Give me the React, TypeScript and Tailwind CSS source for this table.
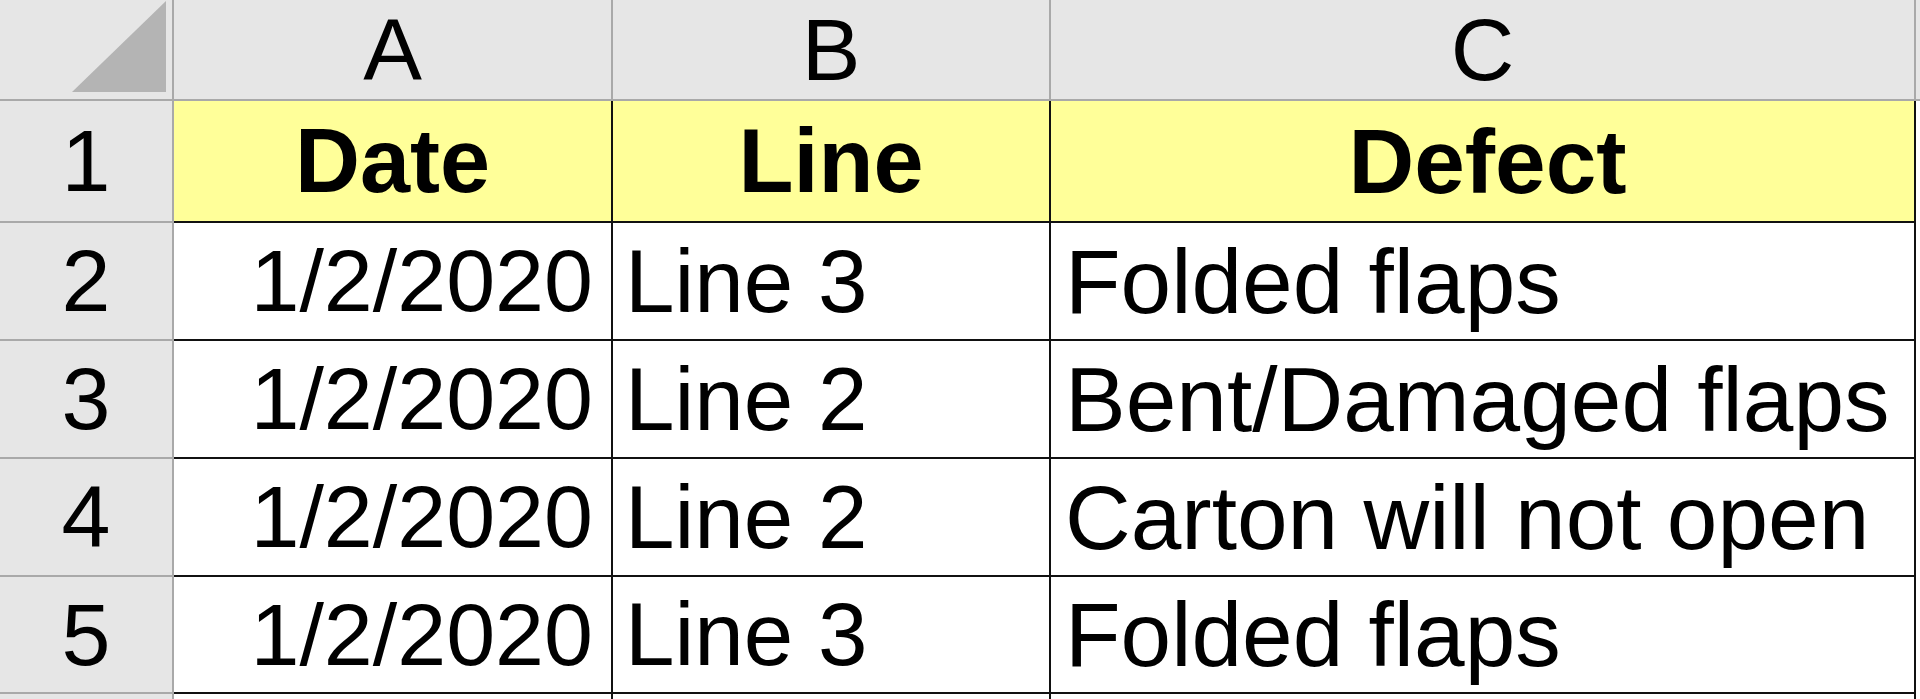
import React from "react";

const font = { fontFamily: '"Liberation Sans", Arial, sans-serif' };

const rows = [
  { n: "2", date: "1/2/2020", line: "Line 3", defect: "Folded flaps" },
  { n: "3", date: "1/2/2020", line: "Line 2", defect: "Bent/Damaged flaps" },
  { n: "4", date: "1/2/2020", line: "Line 2", defect: "Carton will not open" },
  { n: "5", date: "1/2/2020", line: "Line 3", defect: "Folded flaps" },
];

function ColHead({ children }: { children?: React.ReactNode }) {
  return (
    <div className="flex items-center justify-center bg-[#e6e6e6] border-r-2 border-b-2 border-[#a9a9a9] text-[88px] leading-none text-black">
      {children}
    </div>
  );
}

function RowHead({ children }: { children?: React.ReactNode }) {
  return (
    <div className="flex items-center justify-center bg-[#e6e6e6] border-r-2 border-b-2 border-[#a9a9a9] text-[88px] leading-none text-black">
      {children}
    </div>
  );
}

function Cell({
  children,
  className = "",
}: {
  children?: React.ReactNode;
  className?: string;
}) {
  return (
    <div
      className={`flex items-center border-r-2 border-b-2 border-[#111111] leading-none text-black whitespace-nowrap overflow-hidden ${className}`}
    >
      {children}
    </div>
  );
}

export default function App() {
  return (
    <div
      className="h-[699px] w-[1920px] overflow-hidden bg-white grid grid-cols-[174px_439px_438px_865px_1fr] grid-rows-[101px_122px_118px_118px_118px_117px_1fr]"
      style={font}
    >
      <div className="relative bg-[#e6e6e6] border-r-2 border-b-2 border-[#a9a9a9]">
        <svg className="absolute left-[72px] top-[1px]" width="94" height="91" viewBox="0 0 94 91">
          <polygon points="94,0 94,91 0,91" fill="#b4b4b4" />
        </svg>
      </div>
      <ColHead>A</ColHead>
      <ColHead>B</ColHead>
      <ColHead>C</ColHead>
      <div className="bg-[#e6e6e6] border-b-2 border-[#a9a9a9]" />

      <RowHead>1</RowHead>
      <Cell className="justify-center bg-[#ffff99] font-bold text-[90px]">Date</Cell>
      <Cell className="justify-center bg-[#ffff99] font-bold text-[90px]">Line</Cell>
      <Cell className="justify-center bg-[#ffff99] font-bold text-[91px] pl-[10px]">Defect</Cell>
      <div className="bg-white" />

      {rows.map((r) => (
        <React.Fragment key={r.n}>
          <RowHead>{r.n}</RowHead>
          <Cell className="justify-end pr-[18px] bg-white text-[88px]">{r.date}</Cell>
          <Cell className="justify-start pl-[12px] bg-white text-[89px]">{r.line}</Cell>
          <Cell className="justify-start pl-[14px] bg-white text-[91px]">{r.defect}</Cell>
          <div className="bg-white" />
        </React.Fragment>
      ))}

      <div className="bg-[#e6e6e6] border-r-2 border-[#a9a9a9]" />
      <div className="bg-white border-r-2 border-[#111111]" />
      <div className="bg-white border-r-2 border-[#111111]" />
      <div className="bg-white border-r-2 border-[#111111]" />
      <div className="bg-white" />
    </div>
  );
}
